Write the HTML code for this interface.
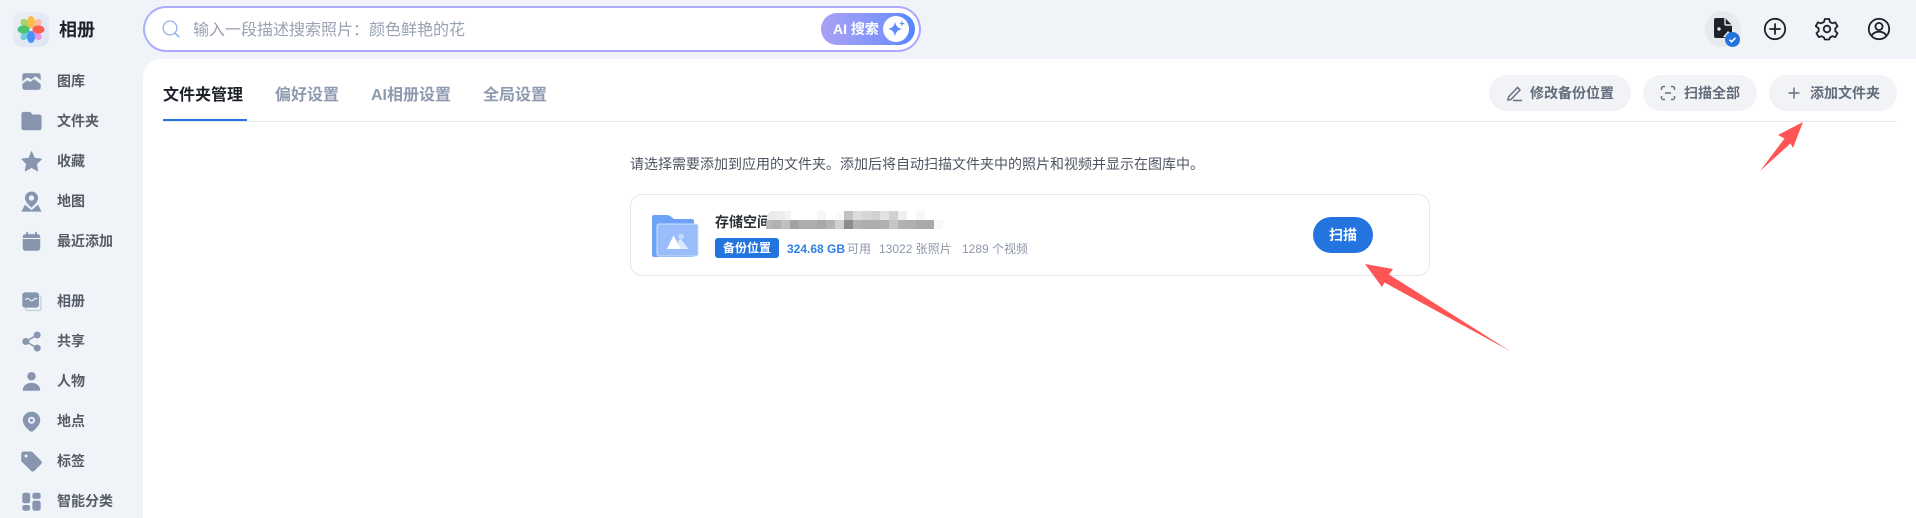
<!DOCTYPE html>
<html lang="zh"><head><meta charset="utf-8"><title>相册</title>
<style>
*{margin:0;padding:0;box-sizing:border-box}
html,body{width:1916px;height:518px;overflow:hidden;background:#f0f4f9;font-family:"Liberation Sans","Noto Sans CJK SC",sans-serif}
.a{position:absolute}
.t{position:absolute;white-space:nowrap;line-height:20px}
.nav{position:absolute;left:57px;font-size:14px;font-weight:700;color:#565c67;line-height:20px;white-space:nowrap}
.ic{position:absolute;left:20.5px;width:21px;height:21px;margin-top:1.5px;fill:#8796ae}
.btn{position:absolute;top:75px;height:36px;border-radius:18px;background:#f2f3f6;font-size:14px;font-weight:700;color:#626c7b;line-height:36px;white-space:nowrap}
.btn svg{position:absolute;top:8px;left:16px;width:20px;height:20px;fill:none;stroke:#68717f;stroke-width:1.5}
.btn span{position:absolute;top:0}
.tab{position:absolute;top:84px;font-size:16px;font-weight:700;color:#8d9ab0;line-height:24px;white-space:nowrap}
.m{position:absolute;width:9px;height:9px}
</style></head><body>

<!-- logo -->
<div class="a" style="left:13px;top:12px;width:36px;height:35px;border-radius:9px;background:linear-gradient(145deg,#eaeff7,#dde6f3)"></div>
<svg class="a" style="left:17px;top:15px" width="28" height="29" viewBox="-14 -14.5 28 29">
<g>
<ellipse cx="5.500" cy="-5.500" rx="3.800" ry="6" transform="rotate(45 5.500 -5.500)" fill="#fbb9a6"/>
<ellipse cx="-5.500" cy="-5.500" rx="3.800" ry="6" transform="rotate(-45 -5.500 -5.500)" fill="#a6d46a"/>
<ellipse cx="-5.500" cy="5.500" rx="3.800" ry="6" transform="rotate(45 -5.500 5.500)" fill="#6ed0dc"/>
<ellipse cx="5.500" cy="5.500" rx="3.800" ry="6" transform="rotate(-45 5.500 5.500)" fill="#e39ae0"/>
<ellipse cx="0" cy="-7.500" rx="4" ry="6" fill="#f9bd4a"/>
<ellipse cx="-7.500" cy="0" rx="6" ry="4" fill="#4cc273"/>
<ellipse cx="7.500" cy="0" rx="6" ry="4" fill="#ff5d4d"/>
<ellipse cx="0" cy="7.500" rx="4" ry="6" fill="#4d8ffb"/>
</g></svg>
<div class="t" style="left:59px;top:18px;font-size:18px;font-weight:700;color:#1d2129;line-height:24px">相册</div>

<!-- search -->
<div class="a" style="left:143px;top:6px;width:778px;height:46px;border-radius:23px;background:#fff;border:2px solid #aba8fb;border-color:#abaafc #aca6fb #abaafc #a9b2fb"></div>
<svg class="a" style="left:161px;top:19px" width="20" height="20" viewBox="0 0 20 20" fill="none" stroke-width="1.4"><circle cx="9" cy="9" r="6.900" stroke="#9fb4f2"/><path d="M14 14l4 4" stroke="#7fb2e8" stroke-linecap="round"/></svg>
<div class="t" style="left:193px;top:21px;font-size:16px;color:#98a2b2">输入一段描述搜索照片：颜色鲜艳的花</div>
<div class="a" style="left:821px;top:13px;width:94px;height:32px;border-radius:16px;background:linear-gradient(90deg,#a8a2f4,#7f94fb 65%,#5286fb)"></div>
<div class="t" style="left:833px;top:19px;font-size:14px;font-weight:700;color:#fff">AI 搜索</div>
<div class="a" style="left:883px;top:16px;width:26px;height:26px;border-radius:50%;background:#fff"></div>
<svg class="a" style="left:883px;top:16px" width="26" height="26" viewBox="0 0 26 26" fill="#5f8bfa"><path d="M12 5.500c.8 4.600 2.400 6.300 7 7.500-4.600 1.200-6.200 2.900-7 7.500-.8-4.600-2.400-6.300-7-7.500 4.600-1.200 6.200-2.900 7-7.500z"/><path d="M19 4l.7 2.300L22 7l-2.300.7L19 10l-.7-2.300L16 7l2.300-.7z" transform="translate(0 .5)"/></svg>

<!-- top right icons -->
<div class="a" style="left:1705px;top:11px;width:36px;height:36px;border-radius:50%;background:#e6e9ee"></div>
<svg class="a" style="left:1714px;top:18px" width="19" height="22" viewBox="0 0 19 22"><path d="M2 0h9l7 7v11a2 2 0 0 1-2 2H2a2 2 0 0 1-2-2V2a2 2 0 0 1 2-2z" fill="#1f2329"/><path d="M11 0v6a1 1 0 0 0 1 1h6" fill="none" stroke="#e6e9ee" stroke-width="1.400"/><circle cx="5" cy="11" r="1.700" fill="#e6e9ee"/><path d="M9 19l5-6 3 3v4z" fill="#e6e9ee"/></svg>
<div class="a" style="left:1725px;top:32px;width:15px;height:15px;border-radius:50%;background:#2474e0"></div>
<svg class="a" style="left:1725px;top:32px" width="15" height="15" viewBox="0 0 15 15" fill="none" stroke="#fff" stroke-width="1.500"><path d="M4.500 7.800l2.100 2 3.900-4"/></svg>
<svg class="a" style="left:1763px;top:17px" width="24" height="24" viewBox="0 0 24 24" fill="none" stroke="#1f2329" stroke-width="1.800"><circle cx="12" cy="12" r="10.200"/><path d="M12 7v10M7 12h10" stroke-linecap="round"/></svg>
<svg class="a" style="left:1815px;top:17px" width="24" height="24" viewBox="0 0 24 24" fill="none" stroke="#1f2329" stroke-width="1.800" stroke-linejoin="round"><path d="M9.800 2h4.400l.8 3 2.300 1.300 3-.9 2.200 3.800-2.200 2.200v2.700l2.200 2.200-2.200 3.800-3-.9L15 20.500l-.8 2H9.800l-.8-2-2.300-1.300-3 .9-2.200-3.800 2.200-2.200v-2.700L.7 9.200l2.200-3.800 3 .9L9 5z"/><circle cx="12" cy="12" r="3.300"/></svg>
<svg class="a" style="left:1867px;top:17px" width="24" height="24" viewBox="0 0 24 24" fill="none" stroke="#1f2329" stroke-width="1.800"><circle cx="12" cy="12" r="10.200"/><circle cx="12" cy="9.500" r="3.600"/><path d="M4.500 19c1.500-3 4.300-4.300 7.500-4.300s6 1.300 7.500 4.300"/></svg>

<!-- main panel -->
<div class="a" style="left:143px;top:59px;width:1773px;height:459px;background:#fff;border-top-left-radius:18px"></div>

<!-- sidebar -->
<svg class="ic" style="top:69px" viewBox="0 0 24 24"><path d="M4 2.500h16A2.500 2.500 0 0 1 22.500 5v5.500L18 7c-1-.8-2-.8-3 0l-3 2.500L9 8c-1-.6-2-.6-3 0l-4.500 4V5A2.500 2.500 0 0 1 4 2.500z"/><path d="M1.500 15l5.500-4.500 3.500 2 4.500-3.500 7.500 6V19a2.500 2.500 0 0 1-2.500 2.500H4A2.500 2.500 0 0 1 1.500 19z"/></svg>
<div class="nav" style="top:71px">图库</div>
<svg class="ic" style="top:109px" viewBox="0 0 24 24"><path d="M3 1.500h6.500c1 0 1.500.4 2 1l1.500 2h8c1.300 0 2.500 1 2.500 2.500v13c0 1.500-1.200 2.500-2.500 2.500H3C1.500 22.500.500 21.500.500 20V4C.5 2.500 1.500 1.500 3 1.500z" transform="translate(0 -.5)"/></svg>
<div class="nav" style="top:111px">文件夹</div>
<svg class="ic" style="top:149px" viewBox="0 0 24 24"><path d="M12 .8l3.500 7.400 8 1-5.800 5.600 1.500 8-7.200-4-7.200 4 1.500-8L1 9.200l8-1z" stroke="#8796ae" stroke-width="1" stroke-linejoin="round"/></svg>
<div class="nav" style="top:151px">收藏</div>
<svg class="ic" style="top:189px" viewBox="0 0 24 24"><path fill-rule="evenodd" d="M12 .5a7.500 7.500 0 0 1 7.500 7.500c0 3.600-3.500 7.500-7.500 11-4-3.500-7.500-7.400-7.500-11A7.500 7.500 0 0 1 12 .5zm0 4.500a3 3 0 1 0 0 6 3 3 0 0 0 0-6z"/><path d="M4.500 15.500l7.500 6.500 7.500-6.500L23.500 23.500H.5z"/></svg>
<div class="nav" style="top:191px">地图</div>
<svg class="ic" style="top:229px" viewBox="0 0 24 24"><rect x="2" y="3.500" width="20" height="19" rx="3"/><rect x="6" y="1" width="2.200" height="4" rx="1"/><rect x="16" y="1" width="2.200" height="4" rx="1"/><rect x="2" y="8" width="20" height="1.200" fill="#f0f4f9"/></svg>
<div class="nav" style="top:231px">最近添加</div>

<svg class="ic" style="top:289px" viewBox="0 0 24 24"><rect x="4.500" y="5" width="19" height="18" rx="3" fill="#c6cfdc"/><rect x="6" y="6" width="16" height="15.500" rx="2" fill="#f0f4f9"/><rect x="1.500" y="1.500" width="19" height="17.500" rx="3"/><path d="M5 10c2-2 3-2 5 0s3 1.500 5-.5 2.500-1 3 0" fill="none" stroke="#f0f4f9" stroke-width="1.300"/></svg>
<div class="nav" style="top:291px">相册</div>
<svg class="ic" style="top:329px" viewBox="0 0 24 24"><circle cx="5.500" cy="12" r="4"/><circle cx="18.500" cy="4.500" r="4"/><circle cx="18.500" cy="19.500" r="4"/><path d="M5.500 12l13-7.500M5.500 12l13 7.500" stroke="#8796ae" stroke-width="1.800"/></svg>
<div class="nav" style="top:331px">共享</div>
<svg class="ic" style="top:369px" viewBox="0 0 24 24"><circle cx="12" cy="6" r="4.800"/><path d="M2 22.500c0-6 4.500-9 10-9s10 3 10 9z"/></svg>
<div class="nav" style="top:371px">人物</div>
<svg class="ic" style="top:409px" viewBox="0 0 24 24"><path fill-rule="evenodd" d="M12 .8c5.600 0 10 4.200 10 9.700 0 4.500-4 9-8 12.300-1.200 1-2.800 1-4 0-4-3.300-8-7.800-8-12.300C2 5 6.400.8 12 .8zm0 5.800a4 4 0 1 0 0 8 4 4 0 0 0 0-8z"/><circle cx="12" cy="10.600" r="1.900"/></svg>
<div class="nav" style="top:411px">地点</div>
<svg class="ic" style="top:449px" viewBox="0 0 24 24"><path fill-rule="evenodd" d="M2.500 .5h8.500c.8 0 1.300.3 1.800.8l10 10c1 1 1 2.500 0 3.500l-8 8c-1 1-2.500 1-3.500 0l-10-10C.3 12.300 0 11.800 0 11V3C0 1.500 1 .5 2.500.5zM5.500 4a1.700 1.700 0 1 0 0 3.400 1.700 1.700 0 0 0 0-3.400z" transform="translate(.3 0)"/></svg>
<div class="nav" style="top:451px">标签</div>
<svg class="ic" style="top:489px" viewBox="0 0 24 24"><rect x="1.500" y="2" width="9" height="12" rx="2.500"/><rect x="13" y="2" width="9.500" height="7" rx="2.500"/><rect x="1.500" y="16" width="9" height="6.500" rx="2.500"/><rect x="13" y="11" width="9.500" height="11.500" rx="2.500"/></svg>
<div class="nav" style="top:491px">智能分类</div>

<!-- tabs -->
<div class="tab" style="left:163px;color:#1d2129">文件夹管理</div>
<div class="tab" style="left:275px">偏好设置</div>
<div class="tab" style="left:371px">AI相册设置</div>
<div class="tab" style="left:483px">全局设置</div>
<div class="a" style="left:163px;top:121px;width:1734px;height:1px;background:#e8eaee"></div>
<div class="a" style="left:163px;top:119px;width:84px;height:2px;background:#2474e0"></div>

<!-- buttons -->
<div class="btn" style="left:1489px;width:142px"><svg viewBox="0 0 20 20" style="left:16px;top:7.500px"><path d="M3.500 14l9-9.500 2.500 2.500-9 9.500-3 .5zM8 17.500h9"/></svg><span style="left:41px">修改备份位置</span></div>
<div class="btn" style="left:1643px;width:114px"><svg viewBox="0 0 20 20" style="left:15px"><path d="M7 3.500H5.500a2 2 0 0 0-2 2V7M13 3.500h1.500a2 2 0 0 1 2 2V7M7 16.500H5.500a2 2 0 0 1-2-2V13M13 16.500h1.500a2 2 0 0 0 2-2V13M7 10h6"/></svg><span style="left:41px">扫描全部</span></div>
<div class="btn" style="left:1769px;width:128px"><svg viewBox="0 0 20 20" style="left:15px"><path d="M10 4.500v11M4.500 10h11"/></svg><span style="left:41px">添加文件夹</span></div>

<!-- intro -->
<div class="t" style="left:630px;top:154px;font-size:14px;color:#4e5562">请选择需要添加到应用的文件夹。添加后将自动扫描文件夹中的照片和视频并显示在图库中。</div>

<!-- card -->
<div class="a" style="left:630px;top:194px;width:800px;height:82px;border:1px solid #e3e7ef;border-radius:12px;background:#fff"></div>
<svg class="a" style="left:652px;top:215px" width="47" height="42" viewBox="0 0 47 42">
<path d="M2 0h13c1.500 0 2.500.6 3.500 1.300L22 4h18c1.300 0 2 1 2 2v34a2 2 0 0 1-2 2H2a2 2 0 0 1-2-2V2a2 2 0 0 1 2-2z" fill="#6ea2f8"/>
<rect x="5" y="9" width="41" height="32" rx="2" fill="#99bcfb" stroke="#cfe0fd" stroke-width="1"/>
<circle cx="29" cy="21.500" r="2.800" fill="#c6dafd"/>
<path d="M26 26l3-2 7.500 10H27z" fill="#dbe8fe"/><path d="M15 34l6.500-13.500L29 34z" fill="#fff"/>
</svg>
<div class="t" style="left:715px;top:212px;font-size:14px;font-weight:700;color:#2b2f36">存储空间</div>
<div class="m" style="left:767px;top:211px;background:#eaeaea;border-top-left-radius:6px"></div><div class="m" style="left:776px;top:211px;background:#ececec"></div><div class="m" style="left:785px;top:211px;width:6px;background:#f2f2f2"></div>
<div class="m" style="left:817px;top:211px;background:#f6f6f6"></div><div class="m" style="left:835px;top:211px;background:#fafafa"></div>
<div class="m" style="left:844px;top:211px;background:#c2c2c4"></div><div class="m" style="left:853px;top:211px;background:#dcdcdc"></div><div class="m" style="left:862px;top:211px;background:#d6d6d6"></div><div class="m" style="left:871px;top:211px;background:#d2d2d4"></div><div class="m" style="left:880px;top:211px;background:#e2e2e2"></div><div class="m" style="left:889px;top:211px;background:#d0d0d2"></div><div class="m" style="left:898px;top:211px;background:#efefef"></div><div class="m" style="left:916px;top:211px;background:#f7f7f7"></div>
<div class="m" style="left:766px;top:220px;width:7px;background:#b8b8b8"></div><div class="m" style="left:772px;top:220px;background:#b0b0b0"></div><div class="m" style="left:781px;top:220px;background:#c0c0c0"></div><div class="m" style="left:790px;top:220px;background:#a2a2a2"></div><div class="m" style="left:799px;top:220px;background:#aeaeae"></div><div class="m" style="left:808px;top:220px;background:#aeaeae"></div><div class="m" style="left:817px;top:220px;background:#a8a8a8"></div><div class="m" style="left:826px;top:220px;background:#b4b4b4"></div><div class="m" style="left:835px;top:220px;background:#d0d0d0"></div><div class="m" style="left:844px;top:220px;background:#8c8c8e"></div><div class="m" style="left:853px;top:220px;background:#b2b2b2"></div><div class="m" style="left:862px;top:220px;background:#aeaeae"></div><div class="m" style="left:871px;top:220px;background:#acacac"></div><div class="m" style="left:880px;top:220px;background:#b0b0b0"></div><div class="m" style="left:889px;top:220px;background:#c6c6c6"></div><div class="m" style="left:898px;top:220px;background:#b2b2b2"></div><div class="m" style="left:907px;top:220px;background:#b0b0b0"></div><div class="m" style="left:916px;top:220px;background:#aaaaaa"></div><div class="m" style="left:925px;top:220px;background:#a8a8a8"></div><div class="m" style="left:934px;top:220px;background:#f8f8f8"></div>
<div class="a" style="left:715px;top:238px;width:64px;height:20px;background:#2474e0;border-radius:3px;color:#fff;font-size:12px;font-weight:700;line-height:21px;text-align:center">备份位置</div>
<div class="t" style="left:787px;top:239px;font-size:12px;font-weight:700;color:#2f7fe8">324.68 GB</div>
<div class="t" style="left:847px;top:239px;font-size:12px;color:#8c97a8">可用</div>
<div class="t" style="left:879px;top:239px;font-size:12px;color:#8c97a8">13022 张照片</div>
<div class="t" style="left:962px;top:239px;font-size:12px;color:#8c97a8">1289 个视频</div>
<div class="a" style="left:1313px;top:217px;width:60px;height:36px;border-radius:18px;background:#2474e0;color:#fff;font-size:14px;font-weight:700;line-height:36px;text-align:center">扫描</div>

<!-- arrows -->
<svg class="a" style="left:0;top:0" width="1916" height="518"><path d="M1365 264L1393 269 1389 274.500 1510 351 1384.500 282.500 1382 287z" fill="#ff5555"/><path d="M1803 122L1793 148 1790.500 143.500 1760 171 1784.500 138.500 1778 135z" fill="#ff5555"/></svg>
</body></html>
